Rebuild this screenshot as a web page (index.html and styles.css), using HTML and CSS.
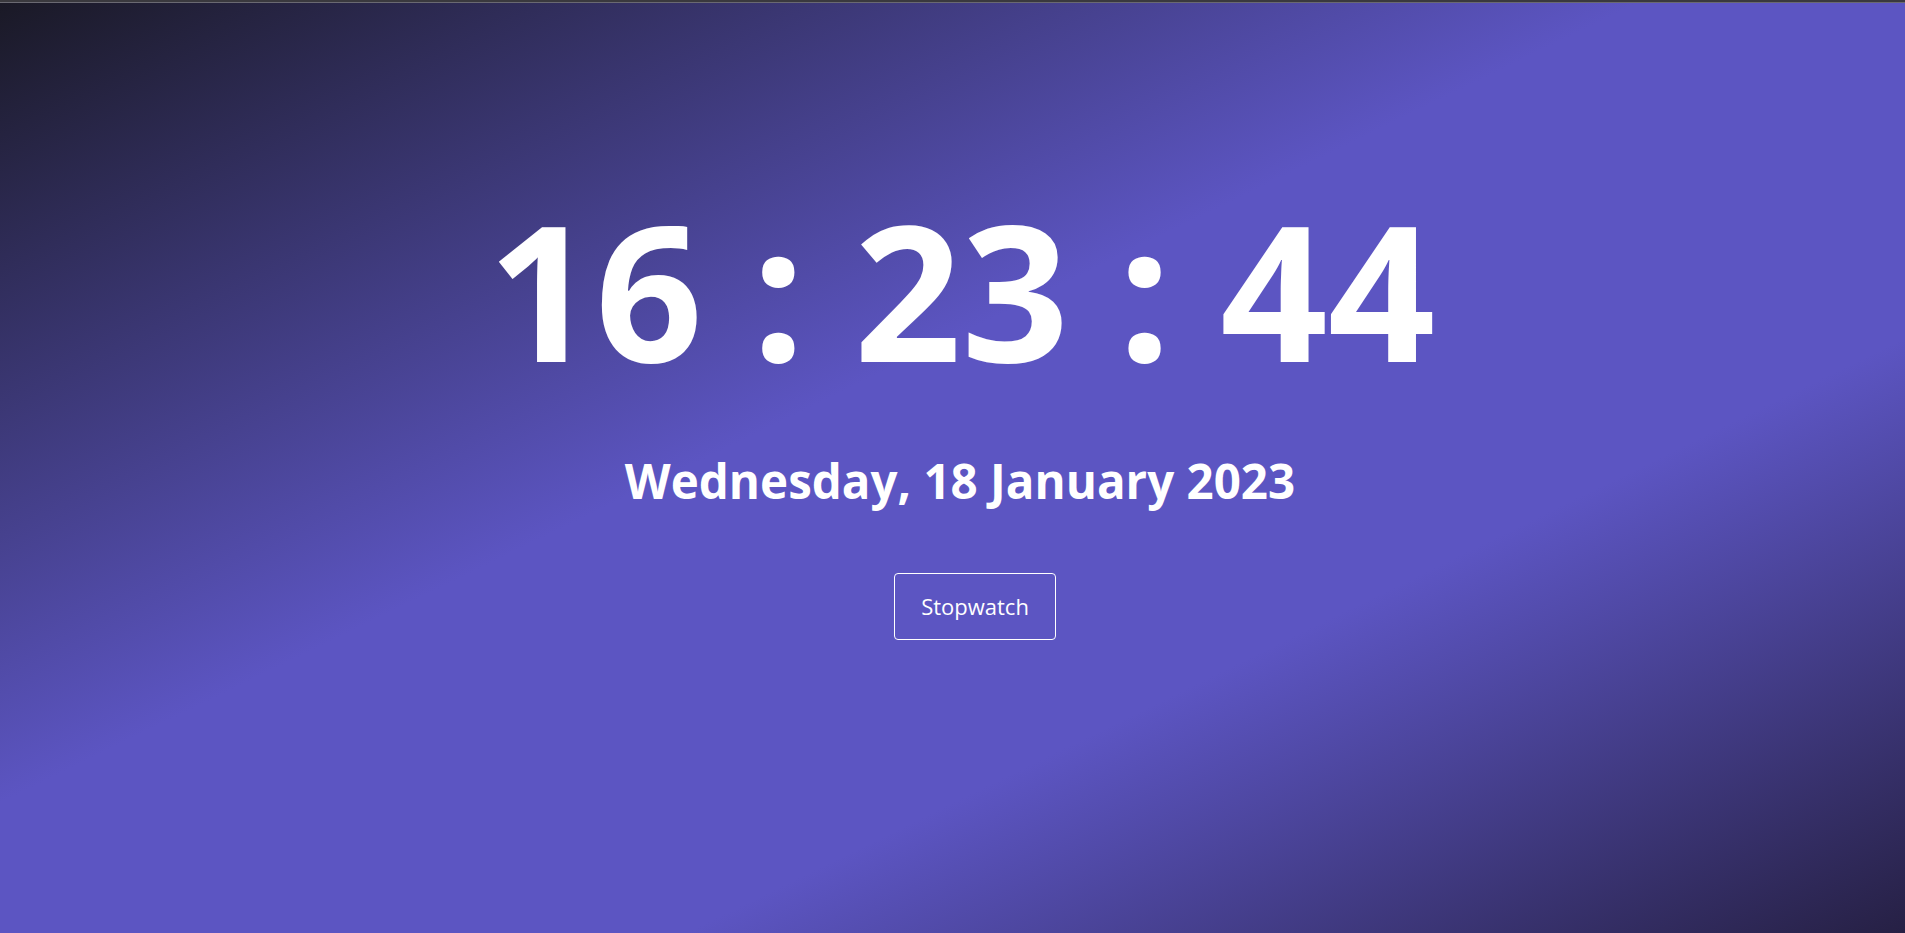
FILE: index.html
```html
<!DOCTYPE html>
<html lang="en">
<head>
<meta charset="utf-8">
<title>Clock</title>
<link rel="stylesheet" href="styles.css">
</head>
<body>
<div class="topbar"></div>
<main class="page">
  <div class="clock">16 : 23 : 44</div>
  <div class="date">Wednesday, 18 January 2023</div>
  <button class="btn" type="button">Stopwatch</button>
</main>
</body>
</html>
```
FILE: styles.css
```css
* { box-sizing: border-box; }
html, body { margin: 0; padding: 0; height: 100%; }
body {
  font-family: "Open Sans", "Noto Sans", sans-serif;
  color: #fff;
  display: flex;
  flex-direction: column;
  background: #5c55c2;
  overflow: hidden;
}
.topbar {
  height: 3px;
  flex: none;
  background: #3a393e;
  border-bottom: 1px solid #6a6972;
}
.page {
  flex: 1;
  display: flex;
  flex-direction: column;
  align-items: center;
  padding-top: 156px;
  background: linear-gradient(to bottom right, #1a1926 0%, #5c55c2 43%, #5c55c2 68%, #262044 100%);
}
.clock {
  margin-left: 18px;
  font-size: 188px;
  font-weight: 700;
  line-height: 261px;
  white-space: pre;
}
.date {
  margin-top: 28px;
  margin-left: 15px;
  font-size: 47.5px;
  font-weight: 700;
  line-height: 65px;
}
.btn {
  margin-top: 60px;
  margin-left: 45px;
  font-family: "Open Sans", sans-serif;
  font-size: 22px;
  line-height: 33px;
  color: #fff;
  background: transparent;
  border: 1px solid #fff;
  border-radius: 4px;
  padding: 16px 26px;
}
```
